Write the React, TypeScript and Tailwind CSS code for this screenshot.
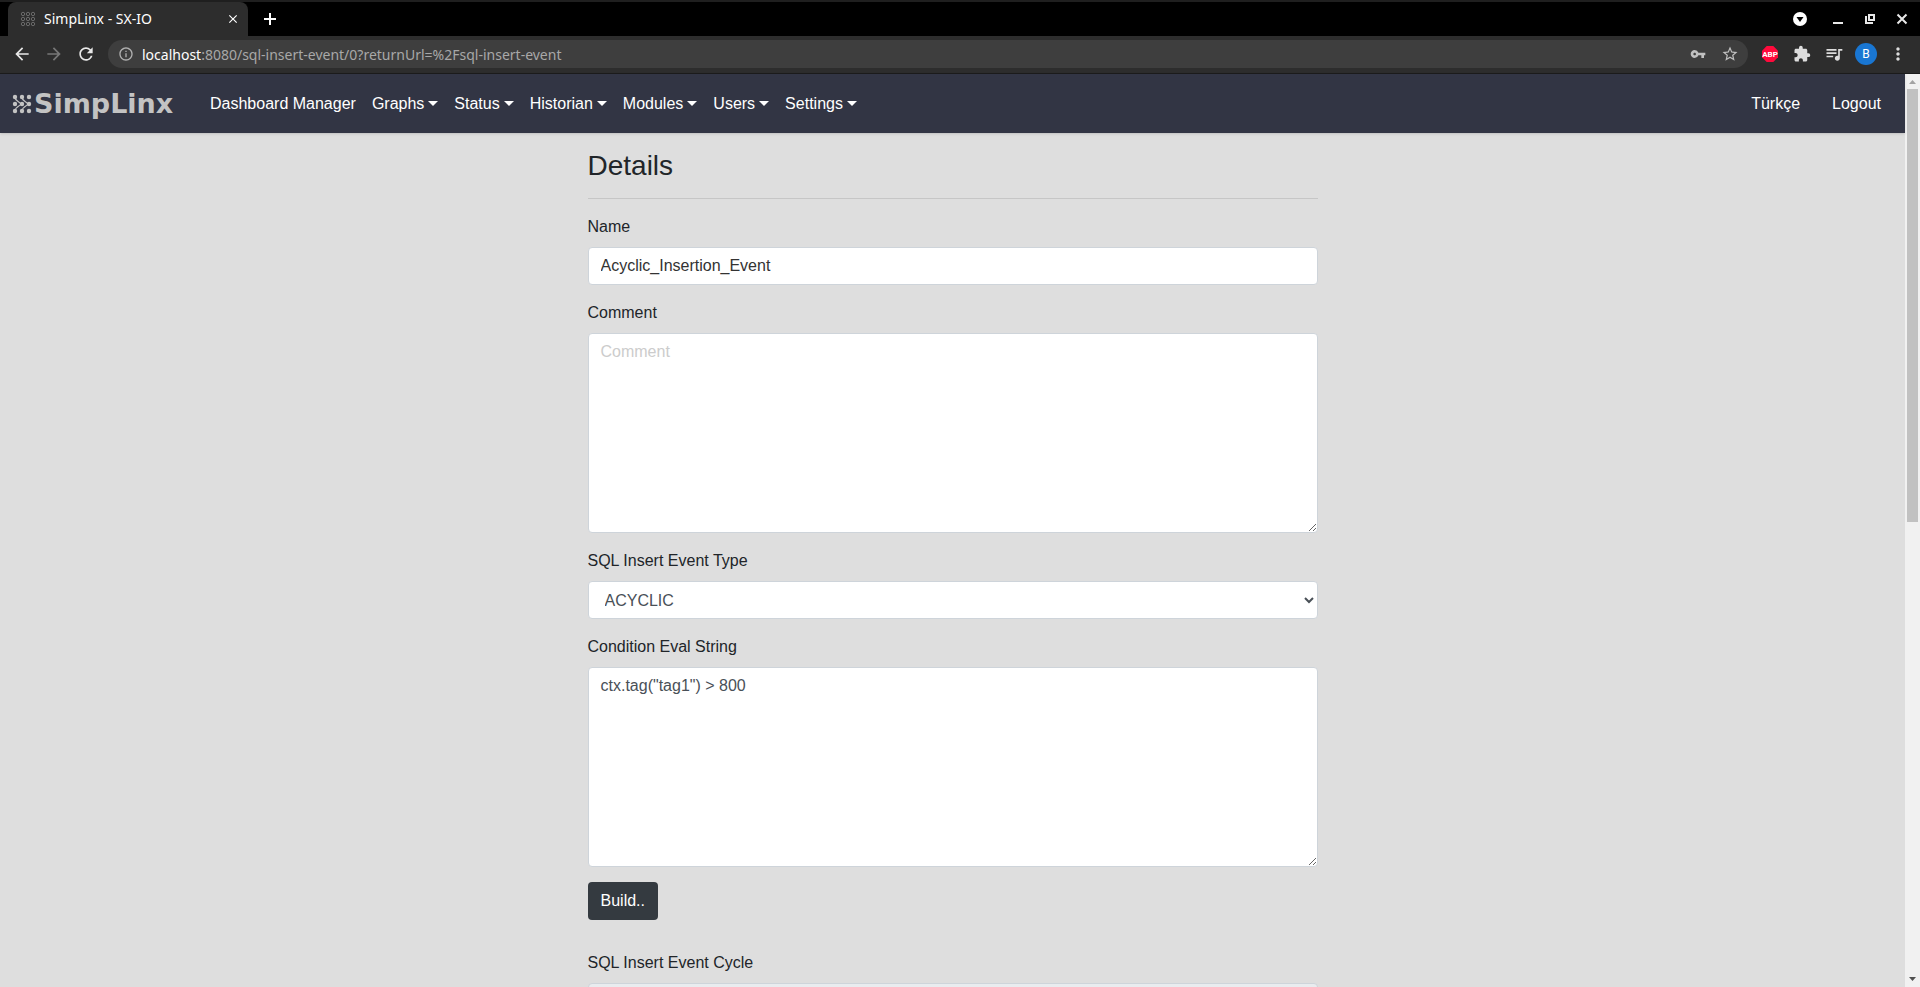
import { useState } from 'react'
import type { ReactNode } from 'react'
import {
  MdArrowBack,
  MdArrowForward,
  MdClose,
  MdExtension,
  MdInfoOutline,
  MdMoreVert,
  MdQueueMusic,
  MdRefresh,
  MdStarBorder,
  MdVpnKey,
} from 'react-icons/md'

interface NavItem {
  label: string
  hasMenu: boolean
}

const NAV_ITEMS: NavItem[] = [
  { label: 'Dashboard Manager', hasMenu: false },
  { label: 'Graphs', hasMenu: true },
  { label: 'Status', hasMenu: true },
  { label: 'Historian', hasMenu: true },
  { label: 'Modules', hasMenu: true },
  { label: 'Users', hasMenu: true },
  { label: 'Settings', hasMenu: true },
]

const CONTROL =
  'block w-full rounded border border-[#ced4da] bg-white px-3 text-base leading-6 outline-none placeholder:text-[#cccccc]'

/** Window title bar with the single open tab. */
function TabStrip() {
  return (
    <div className="flex h-9 items-end justify-between border-t-2 border-[#1f1f1f] bg-black pr-3 pl-2">
      <div className="flex h-full items-center">
        <div className="flex h-full w-[240px] items-center rounded-t-lg bg-[#2d2d2d] pr-2 pb-px pl-3">
          <svg className="h-4 w-4" viewBox="0 0 16 16" fill="none" stroke="#6a6a6a">
            {[3, 8, 13].map((y) =>
              [3, 8, 13].map((x) => <circle key={`${x}-${y}`} cx={x} cy={y} r="1.7" />),
            )}
          </svg>
          <span className="ml-2 flex-1 text-[14px] leading-5 text-white">SimpLinx - SX-IO</span>
          <button aria-label="Close tab" className="text-white">
            <MdClose className="h-3.5 w-3.5" stroke="currentColor" />
          </button>
        </div>
        <button aria-label="New tab" className="ml-[15px] text-white">
          <svg className="h-3.5 w-3.5" viewBox="0 0 14 14" stroke="currentColor" strokeWidth="2">
            <path d="M7 1v12M1 7h12" />
          </svg>
        </button>
      </div>
      <div className="flex h-full items-center gap-5 text-[#e8e8e8]">
        <button aria-label="Search tabs" className="mr-1">
          <svg className="h-4 w-4" viewBox="0 0 16 16">
            <circle cx="8" cy="8" r="7" fill="#ffffff" />
            <path d="M4.500 6h7L8 11z" fill="#000000" />
          </svg>
        </button>
        <button aria-label="Minimize">
          <svg className="h-3 w-3" viewBox="0 0 12 12" fill="currentColor">
            <path d="M1 9h10v2H1z" />
          </svg>
        </button>
        <button aria-label="Restore">
          <svg className="h-3 w-3" viewBox="0 0 12 12" fill="none" stroke="currentColor" strokeWidth="2">
            <path d="M5 2h5v5H5zM2 3v7h7" />
          </svg>
        </button>
        <button aria-label="Close window">
          <svg className="h-3 w-3" viewBox="0 0 12 12" stroke="currentColor" strokeWidth="2">
            <path d="M1.500 1.500l9 9M10.500 1.500l-9 9" />
          </svg>
        </button>
      </div>
    </div>
  )
}

function IconButton({ label, children }: { label: string; children: ReactNode }) {
  return (
    <button aria-label={label} className="flex w-8 items-center justify-center">
      {children}
    </button>
  )
}

function Toolbar() {
  return (
    <div className="flex h-[38px] items-center border-b border-[#1c1c1c] bg-[#2d2d2d] px-1.5 pb-px">
      <div className="flex items-center text-[#e8e8e8]">
        <IconButton label="Back">
          <MdArrowBack className="h-5 w-5" />
        </IconButton>
        <IconButton label="Forward">
          <MdArrowForward className="h-5 w-5 text-[#777777]" />
        </IconButton>
        <IconButton label="Reload">
          <MdRefresh className="h-5 w-5" />
        </IconButton>
      </div>
      <div className="ml-1.5 flex h-7 flex-1 items-center rounded-full bg-[#3e3e3e] pr-0.5 pl-2.5 text-[14px] text-[#c0c0c0]">
        <MdInfoOutline className="h-4 w-4 text-[#b0b0b0]" />
        <span className="ml-2 flex-1 text-[#a8a8a8]">
          <span className="text-white">localhost</span>:8080/sql-insert-event/0?returnUrl=%2Fsql-insert-event
        </span>
        <IconButton label="Saved passwords">
          <MdVpnKey className="h-4 w-4" />
        </IconButton>
        <IconButton label="Bookmark this page">
          <MdStarBorder className="h-[18px] w-[18px]" />
        </IconButton>
      </div>
      <div className="ml-1.5 flex items-center text-[#dddddd]">
        <IconButton label="Adblock Plus">
          <svg className="h-4 w-4" viewBox="0 0 16 16">
            <path d="M4.700 0h6.600L16 4.700v6.600L11.300 16H4.700L0 11.300V4.700z" fill="#ff0a3c" />
            <text
              x="8"
              y="11"
              fontSize="8"
              fontWeight="700"
              fontFamily="Roboto, sans-serif"
              textAnchor="middle"
              fill="#ffffff"
            >
              ABP
            </text>
          </svg>
        </IconButton>
        <IconButton label="Extensions">
          <MdExtension className="h-[18px] w-[18px]" />
        </IconButton>
        <IconButton label="Media controls">
          <MdQueueMusic className="h-5 w-5" />
        </IconButton>
        <IconButton label="Profile">
          <span className="flex h-[22px] w-[22px] items-center justify-center rounded-full bg-[#1976d2] font-['Roboto',sans-serif] text-[12px] text-white">
            B
          </span>
        </IconButton>
        <IconButton label="Menu">
          <MdMoreVert className="h-5 w-5" />
        </IconButton>
      </div>
    </div>
  )
}

function Logo() {
  return (
    <a href="#" className="flex w-[162px] shrink-0 items-center text-[#c3c3c3]" aria-label="SimpLinx">
      <svg className="h-5 w-5 shrink-0" viewBox="0 0 20 20" fill="currentColor">
        {[3, 10, 17].map((y) =>
          [3, 10, 17].map((x) => <circle key={`${x}-${y}`} cx={x} cy={y} r="2.2" />),
        )}
        <path
          d="M10 3c0 4 4 4 6 7-2 3-6 3-6 7M3 3c0 4 4 4 6 7-2 3-6 3-6 7"
          fill="none"
          stroke="currentColor"
          strokeWidth="1.3"
        />
      </svg>
      <span className="ml-0.5 font-['DejaVu_Sans',sans-serif] text-[27px] leading-6 font-bold">SimpLinx</span>
    </a>
  )
}

function Navbar() {
  return (
    <nav className="relative flex h-[59px] items-center bg-[#323544] pr-6 pl-3 text-base text-white shadow-sm">
      <Logo />
      <div className="ml-9 flex flex-1 items-center gap-4">
        {NAV_ITEMS.map((item) => (
          <a key={item.label} href="#" className="flex items-center gap-1">
            {item.label}
            {item.hasMenu && (
              <svg className="h-[5px] w-[10px]" viewBox="0 0 10 5" fill="currentColor">
                <path d="M0 0h10L5 5z" />
              </svg>
            )}
          </a>
        ))}
      </div>
      <div className="flex items-center gap-8">
        <a href="#">Türkçe</a>
        <a href="#">Logout</a>
      </div>
    </nav>
  )
}

function Field({ id, label, children }: { id: string; label: string; children: ReactNode }) {
  return (
    <div>
      <label htmlFor={id} className="mb-2 block leading-6">
        {label}
      </label>
      {children}
    </div>
  )
}

function DetailsForm() {
  const [name, setName] = useState('Acyclic_Insertion_Event')
  const [comment, setComment] = useState('')
  const [type, setType] = useState('ACYCLIC')
  const [condition, setCondition] = useState('ctx.tag("tag1") > 800')

  return (
    <form className="mx-auto w-full max-w-[730px] pt-4 text-base text-[#212529]">
      <h3 className="text-[28px] leading-[33px]">Details</h3>
      <hr className="my-4 border-[#c6c6c6]" />
      <div className="flex flex-col gap-4">
        <Field id="name" label="Name">
          <input
            id="name"
            value={name}
            onChange={(e) => setName(e.target.value)}
            className={`${CONTROL} h-[38px] text-[#333333]`}
          />
        </Field>
        <Field id="comment" label="Comment">
          <textarea
            id="comment"
            placeholder="Comment"
            value={comment}
            onChange={(e) => setComment(e.target.value)}
            className={`${CONTROL} h-[200px] resize py-1.5 text-[#495057]`}
          />
        </Field>
        <Field id="type" label="SQL Insert Event Type">
          <select
            id="type"
            value={type}
            onChange={(e) => setType(e.target.value)}
            className="block h-[38px] w-full rounded border border-[#ced4da] bg-white pl-3 text-base text-[#495057]"
          >
            <option>ACYCLIC</option>
            <option>CYCLIC</option>
          </select>
        </Field>
        <Field id="condition" label="Condition Eval String">
          <textarea
            id="condition"
            value={condition}
            onChange={(e) => setCondition(e.target.value)}
            className={`${CONTROL} h-[200px] resize py-1.5 text-[#495057]`}
          />
        </Field>
      </div>
      <button type="button" className="mt-[15px] mb-[31px] block h-[38px] rounded bg-[#343a40] px-[13px] text-white">
        Build..
      </button>
      <Field id="cycle" label="SQL Insert Event Cycle">
        <input id="cycle" disabled className="block h-[38px] w-full rounded border border-[#ced4da] bg-[#e9ecef]" />
      </Field>
    </form>
  )
}

/** Page scrollbar with arrows at both ends. */
function Scrollbar() {
  return (
    <div className="flex w-[15px] flex-col items-center bg-[#f1f1f1]">
      <svg className="h-[15px] w-[15px] shrink-0" viewBox="0 0 15 15" fill="#a3a3a3">
        <path d="M4 10h7L7.500 6z" />
      </svg>
      <div className="w-full flex-1 px-0.5">
        <div className="h-[49%] w-full bg-[#c1c1c1]" />
      </div>
      <svg className="h-[15px] w-[15px] shrink-0" viewBox="0 0 15 15" fill="#505050">
        <path d="M4 5h7L7.500 9z" />
      </svg>
    </div>
  )
}

export default function App() {
  return (
    <div className="flex h-screen flex-col overflow-hidden font-['Liberation_Sans',Arial,sans-serif]">
      <header className="font-['Noto_Sans',sans-serif]">
        <TabStrip />
        <Toolbar />
      </header>
      <div className="flex min-h-0 flex-1">
        <div className="flex min-w-0 flex-1 flex-col bg-[#dedede]">
          <Navbar />
          <main className="min-h-0 flex-1 overflow-hidden">
            <DetailsForm />
          </main>
        </div>
        <Scrollbar />
      </div>
    </div>
  )
}
